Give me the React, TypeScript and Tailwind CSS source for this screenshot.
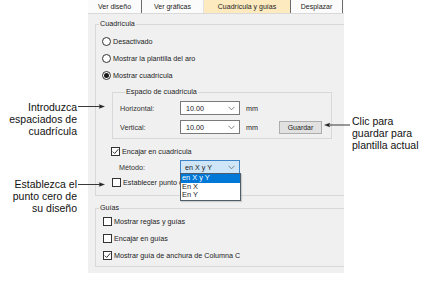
import React from "react";

const font = { fontFamily: '"Liberation Sans", Arial, sans-serif' };

function Radio({ checked, label }: { checked?: boolean; label: string }) {
  return (
    <div className="flex h-[17px] items-center pl-[6px]">
      <span className="flex h-[9px] w-[9px] items-center justify-center rounded-full border border-[#333] bg-white">
        {checked && <span className="h-[5px] w-[5px] rounded-full bg-[#1a1a1a]" />}
      </span>
      <span className="ml-[2px]">{label}</span>
    </div>
  );
}

function Check({ checked }: { checked?: boolean }) {
  return (
    <span className="flex h-[9px] w-[9px] shrink-0 items-center justify-center border border-[#333] bg-white">
      {checked && (
        <svg width="7" height="7" viewBox="0 0 7 7" fill="none">
          <path d="M0.8 3.6 L2.7 5.5 L6.3 1.2" stroke="#222" strokeWidth="0.9" />
        </svg>
      )}
    </span>
  );
}

function Chevron() {
  return (
    <svg width="7" height="5" viewBox="0 0 7 5" fill="none" className="ml-auto mr-[4px]">
      <path d="M0.5 0.8 L3.5 3.8 L6.5 0.8" stroke="#666" strokeWidth="0.8" />
    </svg>
  );
}

function Combo({ value }: { value: string }) {
  return (
    <div className="flex h-[14px] w-[60px] items-center border border-[#7a7a7a] bg-white pl-[5px]">
      <span>{value}</span>
      <Chevron />
    </div>
  );
}

export default function App() {
  return (
    <div
      className="relative flex h-[286px] w-[436px] overflow-hidden bg-white text-[#1c1c1c]"
      style={font}
    >
      {/* left notes */}
      <div className="w-[88px] shrink-0 pr-[11px] pt-[101px] text-right text-[10.5px] leading-[12px] text-[#111]">
        <p>
          Introduzca
          <br />
          espaciados de
          <br />
          cuadrícula
        </p>
        <p className="mt-[41px]">
          Establezca el
          <br />
          punto cero de
          <br />
          su diseño
        </p>
      </div>

      {/* dialog page */}
      <div className="flex h-[273px] w-[256px] shrink-0 flex-col bg-[#f0f0f0] text-[7.2px] leading-[9px]">
        <div className="flex h-[14px] shrink-0 border-b border-[#d9d9d9] bg-[#fbfbfb] text-[7px]">
          <div className="flex w-[54px] items-center justify-center border-r border-[#6b6b6b]">Ver diseño</div>
          <div className="flex w-[62px] items-center justify-center border-r border-[#e2e2e2]">Ver gráficas</div>
          <div className="flex w-[86px] items-center justify-center bg-[#fdeabf]">Cuadrícula y guías</div>
          <div className="flex w-[53px] items-center justify-center border-x border-[#6b6b6b]">Desplazar</div>
        </div>

        <fieldset className="ml-[7px] mt-[5px] border border-r-0 border-[#d8d8d8] pb-[7px]">
          <legend className="ml-[3px] px-[1px] leading-[10px]">Cuadrícula</legend>
          <div className="pt-[4px]">
            <Radio label="Desactivado" />
            <Radio label="Mostrar la plantilla del aro" />
            <Radio checked label="Mostrar cuadrícula" />
          </div>

          <fieldset className="ml-[16px] mr-[12px] mt-[3px] border border-[#d8d8d8] pb-[4px] pl-[7px]">
            <legend className="ml-[5px] px-[1px] leading-[10px]">Espacio de cuadrícula</legend>
            <div className="mt-[4px] flex items-center">
              <span className="w-[60px] text-[#333]">Horizontal:</span>
              <Combo value="10.00" />
              <span className="ml-[6px]">mm</span>
            </div>
            <div className="mt-[5px] flex items-center">
              <span className="w-[60px] text-[#333]">Vertical:</span>
              <Combo value="10.00" />
              <span className="ml-[6px] w-[33px]">mm</span>
              <button className="h-[13px] w-[43px] border border-[#adadad] bg-[#e1e1e1] text-[7px] leading-none">
                Guardar
              </button>
            </div>
          </fieldset>

          <div className="ml-[15px] mt-[6px] flex h-[13px] items-center">
            <Check checked />
            <span className="ml-[2px]">Encajar en cuadrícula</span>
          </div>
          <div className="mt-[2px] flex h-[14px] items-center pl-[23px]">
            <span className="w-[61px] text-[#333]">Método:</span>
            <div className="relative flex h-[14px] w-[60px] items-center border border-[#3d84c6] bg-[#cfe6f8] pl-[4px]">
              <span>en X y Y</span>
              <Chevron />
              <div className="absolute left-[-1px] top-[12px] z-10 w-[61px] border border-[#4f5d6b] bg-white text-[7.4px] leading-[8.5px] shadow-[1px_1px_1px_rgba(0,0,0,0.15)]">
                <div className="bg-[#0078d7] pl-[1px] text-white">en X y Y</div>
                <div className="pl-[1px]">En X</div>
                <div className="pl-[1px]">En Y</div>
              </div>
            </div>
          </div>
          <div className="ml-[16px] mt-[2px] flex h-[12px] items-center">
            <Check />
            {/* the open list covers the end of this label */}
            <span className="ml-[2px] w-[58px] overflow-hidden whitespace-nowrap">Establecer punto de</span>
          </div>
        </fieldset>

        <fieldset className="ml-[7px] mt-[7px] border border-r-0 border-[#d8d8d8] pb-[2px]">
          <legend className="ml-[3px] px-[1px] leading-[10px]">Guías</legend>
          <div className="flex h-[17px] items-center pl-[7px]">
            <Check />
            <span className="ml-[2px]">Mostrar reglas y guías</span>
          </div>
          <div className="flex h-[17px] items-center pl-[7px]">
            <Check />
            <span className="ml-[2px]">Encajar en guías</span>
          </div>
          <div className="flex h-[17px] items-center pl-[7px]">
            <Check checked />
            <span className="ml-[2px]">Mostrar guía de anchura de Columna C</span>
          </div>
        </fieldset>
      </div>

      {/* right note */}
      <div className="pl-[8px] pt-[115px] text-[10.5px] leading-[12px] text-[#111]">
        Clic para
        <br />
        guardar para
        <br />
        plantilla actual
      </div>

      {/* callout arrows */}
      <svg className="pointer-events-none absolute left-0 top-0" width="436" height="286" viewBox="0 0 436 286">
        <g stroke="#222" strokeWidth="0.9" fill="#222">
          <line x1="78" y1="106.5" x2="102" y2="106.5" />
          <path d="M104.5 106.5 L99 104.6 L100.2 106.5 L99 108.4 Z" strokeWidth="0.3" />
          <line x1="78" y1="184.5" x2="102" y2="184.5" />
          <path d="M104.5 184.5 L99 182.6 L100.2 184.5 L99 186.4 Z" strokeWidth="0.3" />
          <line x1="350" y1="125" x2="327" y2="125" />
          <path d="M324.5 125 L330 123.1 L328.8 125 L330 126.9 Z" strokeWidth="0.3" />
        </g>
      </svg>
    </div>
  );
}
